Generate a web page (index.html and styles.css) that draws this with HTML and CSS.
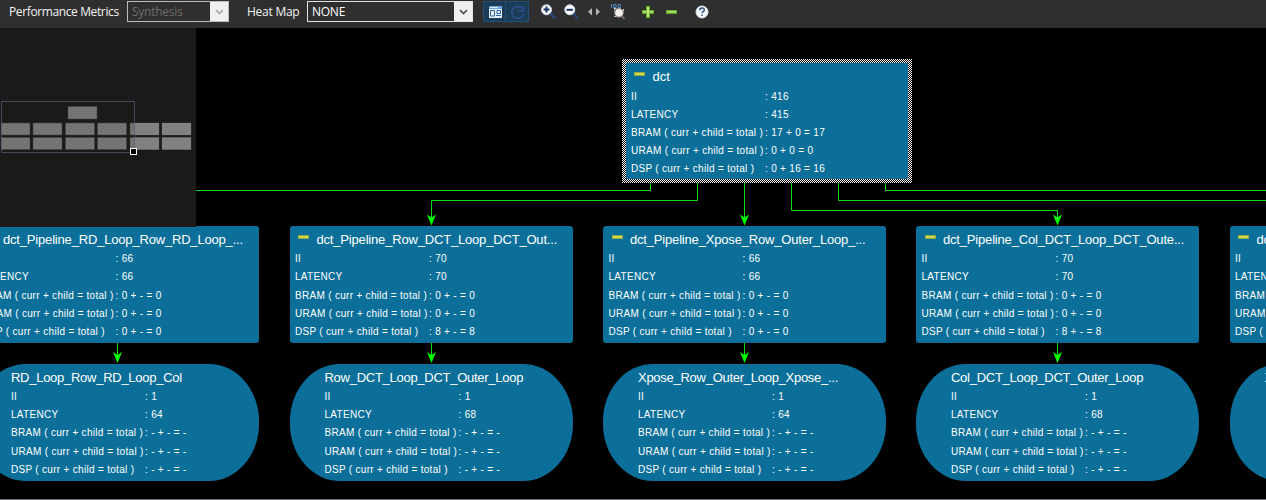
FILE: index.html
```html
<!DOCTYPE html>
<html lang="en">
<head>
<meta charset="utf-8">
<title>Call graph</title>
<link rel="stylesheet" href="styles.css">
</head>
<body>
<header class="toolbar">
  <span class="label label-metrics">Performance Metrics</span>
  <div class="combo combo-metrics disabled"><span class="combo-text">Synthesis</span><span class="combo-arrow"><svg width="9" height="6" viewBox="0 0 9 6"><path d="M1 1l3.5 3.5L8 1"/></svg></span></div>
  <span class="label label-heat">Heat Map</span>
  <div class="combo combo-heat"><span class="combo-text">NONE</span><span class="combo-arrow"><svg width="9" height="6" viewBox="0 0 9 6"><path d="M1 1l3.5 3.5L8 1"/></svg></span></div>
  <svg class="tools" width="240" height="28" viewBox="480 0 240 28">
    <rect x="483.5" y="1.5" width="22" height="20" fill="#1b3c57" stroke="#20517a"/>
    <rect x="505.5" y="1.5" width="23" height="20" fill="#1b3c57" stroke="#20517a"/>
    <rect x="489" y="6" width="13" height="12" fill="#e8f1fa"/>
    <rect x="489" y="6" width="13" height="3" fill="#6fa5dc"/>
    <path d="M490 7.5h8" stroke="#d9ebfc"/>
    <path d="M490.5 10.500h4v5.500h-4zM497 10.500h3.500v3h-3.500zM496 15.500h5" fill="none" stroke="#28659c"/>
    <path d="M522.500 8.500a6 6 0 1 0 1.200 5.500M523.500 6v5h-5" fill="none" stroke="#2b4d84" stroke-width="2"/>
    <path d="M550 13l5 5.500" stroke="#264879" stroke-width="2.500"/>
    <circle cx="546.500" cy="9.800" r="5" fill="#fff" stroke="#c7d6ec"/>
    <path d="M543.500 9.500h6M546.500 6.500v6" stroke="#17305f" stroke-width="2"/>
    <path d="M573 13l5 5.500" stroke="#264879" stroke-width="2.500"/>
    <circle cx="569.800" cy="9.800" r="5" fill="#fff" stroke="#c7d6ec"/>
    <path d="M566.500 9.800h6.500" stroke="#17305f" stroke-width="2"/>
    <path d="M592 8v7.500l-4-3.700zM596 8v7.500l4-3.700z" fill="#b5b5b5"/>
    <path d="M611.500 4v4M613.500 4.500h2.500v3h-2.500zM618 4.500h2.500v3h-2.500z" fill="none" stroke="#5187bd"/>
    <path d="M621 15l3.500 4" stroke="#8c7670" stroke-width="1.500"/>
    <circle cx="619" cy="12.800" r="4.200" fill="#f5eee9" stroke="#aaa39e"/>
    <path d="M614.500 8.500v2M614 8.500h2.500M623.500 9v2M614.500 16.500h2" stroke="#d8d2cc"/>
    <path d="M646 6h4v4h4v4h-4v4h-4v-4h-4v-4h4z" fill="#63a929"/>
    <path d="M647 7h2v4h4v1.500h-4v4.500h-2v-4.500h-4v-1.500h4z" fill="#b5e774"/>
    <rect x="666" y="10" width="11" height="4" fill="#63a929"/>
    <rect x="667" y="11" width="9" height="1.500" fill="#b5e774"/>
    <circle cx="702" cy="12" r="6" fill="#f7fbff" stroke="#dbe7f2" stroke-width="1"/>
    <path d="M699.700 10.300c0-3 4.600-3 4.600-.3 0 1.600-2.300 1.500-2.300 3.300M702 14.500v1.500" fill="none" stroke="#34577f" stroke-width="1.600"/>
  </svg>
</header>
<main class="canvas">
  <svg class="edges" width="1266" height="472" viewBox="0 28 1266 472">
    <g class="wire">
      <path d="M650.500 182v8.500H190"/>
      <path d="M697.500 182v18.500H431.500V220"/>
      <path d="M744.500 182v38"/>
      <path d="M791.500 182v28.500h266V220"/>
      <path d="M838.500 182v18.500H1266"/>
      <path d="M885.500 182v8.500H1266"/>
      <path d="M117.500 343v14M431.500 343v14M744.500 343v14M1057.500 343v14"/>
    </g>
    <g class="head">
      <path d="M431.500 225.500l-4.500-11 4.500 3 4.500-3z"/>
      <path d="M744.500 225.500l-4.500-11 4.500 3 4.500-3z"/>
      <path d="M1057.500 225.500l-4.500-11 4.500 3 4.500-3z"/>
      <path d="M117.500 363l-4.500-11 4.500 3 4.500-3z"/>
      <path d="M431.500 363l-4.500-11 4.500 3 4.500-3z"/>
      <path d="M744.500 363l-4.500-11 4.500 3 4.500-3z"/>
      <path d="M1057.500 363l-4.500-11 4.500 3 4.500-3z"/>
    </g>
  </svg>

  <section class="node root">
    <div class="body">
      <h2><i class="minus"></i>dct</h2>
      <dl><dt>II</dt><dd>: 416</dd><dt>LATENCY</dt><dd>: 415</dd><dt>BRAM ( curr + child = total )</dt><dd>: 17 + 0 = 17</dd><dt>URAM ( curr + child = total )</dt><dd>: 0 + 0 = 0</dd><dt>DSP ( curr + child = total )</dt><dd>: 0 + 16 = 16</dd></dl>
    </div>
  </section>

  <section class="node func c1">
    <h2><i class="minus"></i>dct_Pipeline_RD_Loop_Row_RD_Loop_...</h2>
    <dl><dt>II</dt><dd>: 66</dd><dt>LATENCY</dt><dd>: 66</dd><dt>BRAM ( curr + child = total )</dt><dd>: 0 + - = 0</dd><dt>URAM ( curr + child = total )</dt><dd>: 0 + - = 0</dd><dt>DSP ( curr + child = total )</dt><dd>: 0 + - = 0</dd></dl>
  </section>
  <section class="node func c2">
    <h2><i class="minus"></i>dct_Pipeline_Row_DCT_Loop_DCT_Out...</h2>
    <dl><dt>II</dt><dd>: 70</dd><dt>LATENCY</dt><dd>: 70</dd><dt>BRAM ( curr + child = total )</dt><dd>: 0 + - = 0</dd><dt>URAM ( curr + child = total )</dt><dd>: 0 + - = 0</dd><dt>DSP ( curr + child = total )</dt><dd>: 8 + - = 8</dd></dl>
  </section>
  <section class="node func c3">
    <h2><i class="minus"></i>dct_Pipeline_Xpose_Row_Outer_Loop_...</h2>
    <dl><dt>II</dt><dd>: 66</dd><dt>LATENCY</dt><dd>: 66</dd><dt>BRAM ( curr + child = total )</dt><dd>: 0 + - = 0</dd><dt>URAM ( curr + child = total )</dt><dd>: 0 + - = 0</dd><dt>DSP ( curr + child = total )</dt><dd>: 0 + - = 0</dd></dl>
  </section>
  <section class="node func c4">
    <h2><i class="minus"></i>dct_Pipeline_Col_DCT_Loop_DCT_Oute...</h2>
    <dl><dt>II</dt><dd>: 70</dd><dt>LATENCY</dt><dd>: 70</dd><dt>BRAM ( curr + child = total )</dt><dd>: 0 + - = 0</dd><dt>URAM ( curr + child = total )</dt><dd>: 0 + - = 0</dd><dt>DSP ( curr + child = total )</dt><dd>: 8 + - = 8</dd></dl>
  </section>
  <section class="node func c5">
    <h2><i class="minus"></i>dct</h2>
    <dl><dt>II</dt><dd></dd><dt>LATENCY</dt><dd></dd><dt>BRAM (</dt><dd></dd><dt>URAM (</dt><dd></dd><dt>DSP (</dt><dd></dd></dl>
  </section>

  <section class="node loop c1">
    <h2>RD_Loop_Row_RD_Loop_Col</h2>
    <dl><dt>II</dt><dd>: 1</dd><dt>LATENCY</dt><dd>: 64</dd><dt>BRAM ( curr + child = total )</dt><dd>: - + - = -</dd><dt>URAM ( curr + child = total )</dt><dd>: - + - = -</dd><dt>DSP ( curr + child = total )</dt><dd>: - + - = -</dd></dl>
  </section>
  <section class="node loop c2">
    <h2>Row_DCT_Loop_DCT_Outer_Loop</h2>
    <dl><dt>II</dt><dd>: 1</dd><dt>LATENCY</dt><dd>: 68</dd><dt>BRAM ( curr + child = total )</dt><dd>: - + - = -</dd><dt>URAM ( curr + child = total )</dt><dd>: - + - = -</dd><dt>DSP ( curr + child = total )</dt><dd>: - + - = -</dd></dl>
  </section>
  <section class="node loop c3">
    <h2>Xpose_Row_Outer_Loop_Xpose_...</h2>
    <dl><dt>II</dt><dd>: 1</dd><dt>LATENCY</dt><dd>: 64</dd><dt>BRAM ( curr + child = total )</dt><dd>: - + - = -</dd><dt>URAM ( curr + child = total )</dt><dd>: - + - = -</dd><dt>DSP ( curr + child = total )</dt><dd>: - + - = -</dd></dl>
  </section>
  <section class="node loop c4">
    <h2>Col_DCT_Loop_DCT_Outer_Loop</h2>
    <dl><dt>II</dt><dd>: 1</dd><dt>LATENCY</dt><dd>: 68</dd><dt>BRAM ( curr + child = total )</dt><dd>: - + - = -</dd><dt>URAM ( curr + child = total )</dt><dd>: - + - = -</dd><dt>DSP ( curr + child = total )</dt><dd>: - + - = -</dd></dl>
  </section>
  <section class="node loop c5"><h2>X</h2></section>

  <svg class="minimap" width="196" height="199" viewBox="0 28 196 199">
    <g fill="#757575" stroke="#454545" stroke-width=".6">
      <path d="M68 106.500h29v12.500h-29zM1 123h29v12h-29zM33 123h29v12h-29zM65.500 123h29v12h-29zM97.500 123h29v12h-29zM130 123h29v12h-29zM162 123h29v12h-29z"/>
      <path d="M1 137.500h29v12h-29zM33 137.500h29v12h-29zM65.500 137.500h29v12h-29zM97.500 137.500h29v12h-29zM130 137.500h29v12h-29zM162 137.500h29v12h-29z"/>
    </g>
    <path d="M134 123h25v12h-25zM162 123h29v12h-29zM134 137.500h25v12h-25zM162 137.500h29v12h-29z" fill="#818181"/>
    <rect x="1.500" y="101.500" width="133" height="51" fill="none" stroke="#5a5670" stroke-opacity=".75"/>
    <rect x="130.500" y="148.500" width="6" height="6" fill="#000" stroke="#fff"/>
  </svg>
</main>
</body>
</html>
```
FILE: styles.css
```css
* { box-sizing: border-box; }
body {
  margin: 0;
  width: 1266px;
  height: 500px;
  overflow: hidden;
  background: #000;
  color: #fff;
  font-family: "Liberation Sans", Arial, sans-serif;
}
.toolbar {
  display: flex;
  align-items: flex-start;
  height: 28px;
  background: #2f2f2f;
  font: 12px/22px "Open Sans", "Noto Sans", sans-serif;
  white-space: nowrap;
}
.label { color: #f4f4f4; }
.label-metrics { width: 118px; margin-left: 9px; letter-spacing: -.38px; padding-top: 1px; }
.label-heat { width: 60px; margin-left: 18px; letter-spacing: -.25px; padding-top: 1px; }
.combo {
  display: flex;
  height: 21px;
  margin-top: 1px;
  border: 1px solid #e2e2e2;
  line-height: 19px;
  letter-spacing: -.25px;
}
.combo-metrics { width: 102px; border-color: #bdbdbd; }
.combo-heat { width: 166px; }
.combo-text { flex: 1; padding-left: 4px; }
.disabled .combo-text { color: #6d6d6d; }
.combo-arrow {
  display: flex;
  align-items: center;
  justify-content: center;
  width: 18px;
  background: #f0f0f0;
}
.combo-arrow path { fill: none; stroke: #484848; stroke-width: 1.6; }
.disabled .combo-arrow path { stroke: #aaa; }
.tools { margin-left: 7px; }

.canvas {
  position: relative;
  height: 472px;
  overflow: hidden;
  border-bottom: 1px solid #6e6e80;
}
.edges, .minimap { position: absolute; left: 0; top: 0; }
.minimap { background: #1a1a1a; }
.wire path { fill: none; stroke: #14dc14; }
.head path { fill: #00ff00; }

.node { position: absolute; width: 283px; height: 117px; background: #0b6f99; }
.node h2 {
  display: flex;
  margin: 0;
  height: 24px;
  font-size: 13px;
  font-weight: 400;
  line-height: 24px;
  letter-spacing: -.27px;
  white-space: nowrap;
}
.node dl {
  display: grid;
  grid-template-columns: 134px 1fr;
  grid-auto-rows: 18.25px;
  margin: 0;
  font-size: 10px;
  line-height: 18px;
  letter-spacing: .3px;
  white-space: nowrap;
}
.node dd { margin: 0; }
.minus {
  width: 11px;
  height: 4px;
  margin: 7px 7.500px 0 3px;
  background: #d3d94c;
  border: 1px solid #8faa48;
}
.root {
  left: 622px;
  top: 31px;
  width: 290px;
  height: 124px;
  padding: 4px;
  background: repeating-conic-gradient(#fff 0 25%, #000 0 50%) 0 0 / 2px 2px;
}
.root .body { height: 116px; padding: 2px 0 0 5px; background: #0b6f99; }
.root dl { grid-auto-rows: 18px; }
.root h2 { height: 23px; letter-spacing: 0; }
.func { top: 198px; padding: 2px 0 0 5.5px; border-radius: 3px; }
.func h2 { height: 22px; letter-spacing: -.18px; }
.loop { top: 335.5px; padding: 2px 0 0 35px; border-radius: 50px / 57px; }
.loop h2 { height: 22.400px; }
.c1 { left: -24px; }
.c2 { left: 289.5px; }
.c3 { left: 603px; }
.c4 { left: 916px; }
.c5 { left: 1229.5px; }
```
